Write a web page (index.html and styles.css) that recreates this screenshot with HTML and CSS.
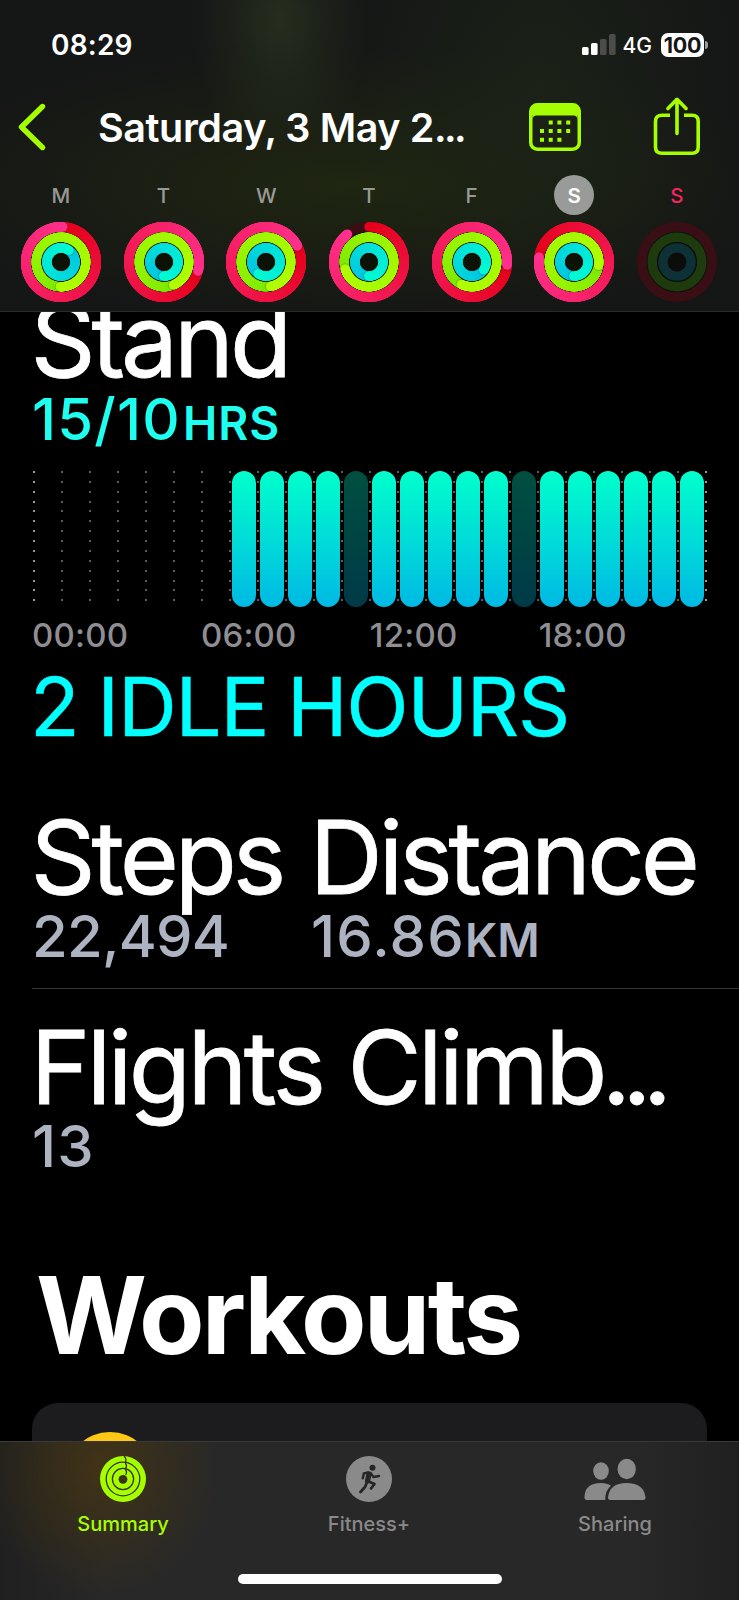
FILE: index.html
```html
<!DOCTYPE html>
<html lang="en">

<head>
    <meta charset="utf-8">
    <title>Activity</title>
    <link rel="stylesheet" href="styles.css">
</head>

<body>
    <header class="top">
        <div class="status">
            <span class="time">08:29</span>
            <div class="status-right">
                <svg class="signal" width="34" height="21" viewBox="0 0 34 21">
                    <rect x="0" y="13" width="6.6" height="8" rx="1.6" fill="#fff"/>
                    <rect x="9" y="9" width="6.6" height="12" rx="1.6" fill="#fff"/>
                    <rect x="18" y="5" width="6.6" height="16" rx="1.6" fill="#4b4d4a"/>
                    <rect x="27" y="0" width="6.6" height="21" rx="1.6" fill="#4b4d4a"/>
                </svg>
                <span class="network">4G</span>
                <span class="battery">100</span>
                <span class="battery-cap"></span>
            </div>
        </div>

        <div class="nav">
            <svg class="back" width="30" height="50" viewBox="0 0 30 50">
                <path d="M25.5 4.5 L4.5 25 L25.5 45.5" fill="none" stroke="#a6ff00" stroke-width="5.4" stroke-linecap="round" stroke-linejoin="round"/>
            </svg>
            <h1 class="date">Saturday, 3 May 2<span class="dots">...</span></h1>
            <svg class="calendar" width="52" height="48" viewBox="0 0 52 48">
                <rect x="1.75" y="1.75" width="48.5" height="44.5" rx="6.5" fill="none" stroke="#a6ff00" stroke-width="3.5"/>
                <path d="M2 12 V8 Q2 2 8 2 H44 Q50 2 50 8 V12 Z" fill="#a6ff00"/>
                <path d="M3.5 17 V12 H48.5 V17 Q48.5 12.5 44.5 12.5 H7.5 Q3.5 12.5 3.5 17 Z" fill="#a6ff00"/>
                <g fill="#a6ff00">
                    <rect x="19.7" y="17.5" width="4" height="4"/><rect x="28.4" y="17.5" width="4" height="4"/><rect x="37.2" y="17.5" width="4" height="4"/>
                    <rect x="11" y="26" width="4" height="4"/><rect x="19.7" y="26" width="4" height="4"/><rect x="28.4" y="26" width="4" height="4"/><rect x="37.2" y="26" width="4" height="4"/>
                    <rect x="11" y="34.8" width="4" height="4"/><rect x="19.7" y="34.8" width="4" height="4"/><rect x="28.4" y="34.8" width="4" height="4"/>
                </g>
            </svg>
            <svg class="share" width="48" height="60" viewBox="0 0 48 60">
                <g fill="none" stroke="#a6ff00" stroke-width="3.6" stroke-linecap="round" stroke-linejoin="round">
                    <path d="M17 18.2 H9 Q2.5 18.2 2.5 24.2 V50 Q2.5 56.3 9 56.3 H39 Q45.2 56.3 45.2 50 V24.2 Q45.2 18.2 39 18.2 H31" stroke-linecap="butt"/>
                    <path d="M24 36.5 V3 M15 11.5 L24 2.3 L33 11.5"/>
                </g>
            </svg>
        </div>

        <div class="week" id="week"></div>
    </header>

    <main class="content">
        <section>
            <h2 class="metric">Stand</h2>
            <p class="value stand">15/10<small>HRS</small></p>
            <div class="chart" id="chart"></div>
            <div class="hours">
                <span>00:00</span><span>06:00</span><span>12:00</span><span>18:00</span>
            </div>
            <p class="idle">2 IDLE HOURS</p>
        </section>

        <section class="row">
            <div class="steps">
                <h2 class="metric">Steps</h2>
                <p class="value">22,494</p>
            </div>
            <div>
                <h2 class="metric">Distance</h2>
                <p class="value">16.86<small>KM</small></p>
            </div>
        </section>

        <section class="flights">
            <h2 class="metric">Flights Climb<span class="dots">...</span></h2>
            <p class="value">13</p>
        </section>

        <h2 class="workouts">Workouts</h2>
        <div class="card"><div class="badge"></div></div>
    </main>

    <footer class="tabs">
        <div class="tab active">
            <svg width="46" height="46" viewBox="0 0 46 46">
                <circle cx="23" cy="23" r="23" fill="#a6ff00"/>
                <g fill="none" stroke="#3a3113" stroke-width="1.3">
                    <circle cx="23" cy="23" r="16.8"/>
                    <circle cx="23" cy="23" r="10.6"/>
                    <path d="M24 0 Q27 3 25.5 6 V7.5 Q27.5 10 25.5 12.3 V13.5 Q27.5 16 25.5 19"/>
                </g>
                <circle cx="23" cy="23.3" r="4.4" fill="#3a3113"/>
            </svg>
            <span>Summary</span>
        </div>
        <div class="tab">
            <svg width="46" height="46" viewBox="0 0 46 46">
                <circle cx="23" cy="23" r="23" fill="#8a8a8a"/>
                <circle cx="26.5" cy="11.8" r="3" fill="#262626"/>
                <g fill="none" stroke="#262626" stroke-linecap="round" stroke-linejoin="round">
                    <path d="M23 18 L21.5 25" stroke-width="5.2"/>
                    <path d="M22 16.5 L17.8 17.5 L16.8 22.3 M24.5 17 L27.5 21 L33 20" stroke-width="2.4"/>
                    <path d="M22.5 25.5 L28.5 28 L25 32.5 M20.5 27.5 L19 31 L14.5 36" stroke-width="2.8"/>
                </g>
            </svg>
            <span>Fitness+</span>
        </div>
        <div class="tab">
            <svg width="62" height="46" viewBox="0 0 62 46">
                <g fill="#8a8a8a">
                    <ellipse cx="17" cy="15" rx="7.8" ry="8.8"/>
                    <ellipse cx="42.7" cy="13" rx="9.2" ry="10.2"/>
                    <path d="M0.5 41.5 Q0.5 27 17 27 Q23 27 27 29.8 Q21 34.5 21.3 44 H3 Q0.5 44 0.5 41.5 Z"/>
                    <path d="M24 41.5 Q25.5 27 42.5 27 Q60 27 61.5 41.5 Q61.5 44 59 44 H26.5 Q24 44 24 41.5 Z"/>
                </g>
            </svg>
            <span>Sharing</span>
        </div>
        <div class="home"></div>
    </footer>

    <script>
        // end angle (degrees) of the move, exercise and stand rings
        const days = [
            { name: 'M', ends: [3, 182, 35] },
            { name: 'T', ends: [105, 158, 182] },
            { name: 'W', ends: [63, 170, 215] },
            { name: 'T', ends: [322, 254, 182], open: true },
            { name: 'F', ends: [95, 206, 125] },
            { name: 'S', ends: [278, 98, 182], selected: true },
            { name: 'S', ends: [0, 0, 0], future: true }
        ];
        const rings = [
            { r: 35.2, width: 9.6, ease: 0.9, from: [228, 0, 24], to: [255, 48, 140], track: '#3c0d13' },
            { r: 24.8, width: 9.2, ease: 0.45, from: [112, 228, 0], to: [176, 255, 0], track: '#173800' },
            { r: 14.1, width: 9.2, ease: 0.8, from: [0, 192, 226], to: [0, 250, 212], track: '#003438' }
        ];

        function point(r, deg) {
            const a = (deg - 90) * Math.PI / 180;
            return [(40 + r * Math.cos(a)).toFixed(2), (40 + r * Math.sin(a)).toFixed(2)];
        }

        function mix(a, b, t) {
            return 'rgb(' + a.map((v, i) => Math.round(v + (b[i] - v) * t)).join(',') + ')';
        }

        function drawRing(ring, end, open) {
            // an open ring starts at the top, a closed one shows its last lap
            const length = open ? end : 360;
            const start = end - length;
            const cap = ring.width / 2;
            let out = `<circle cx="40" cy="40" r="${ring.r}" fill="none" stroke="${open ? ring.track : mix(ring.from, ring.to, .5)}" stroke-width="${ring.width}"/>`;
            if (open) {
                const s = point(ring.r, 0);
                out += `<circle cx="${s[0]}" cy="${s[1]}" r="${cap}" fill="${mix(ring.from, ring.to, 0)}"/>`;
            }
            for (let d = 0; d < length; d += 5) {
                const p = point(ring.r, start + d);
                const q = point(ring.r, start + Math.min(d + 20, length));
                const color = mix(ring.from, ring.to, Math.pow(d / length, ring.ease));
                out += `<path d="M${p} A${ring.r} ${ring.r} 0 0 1 ${q}" fill="none" stroke="${color}" stroke-width="${ring.width}"/>`;
            }
            const c = point(ring.r, end);
            const shade = point(ring.r, end + 50 / ring.r);
            if (!open) out += `<circle cx="${shade[0]}" cy="${shade[1]}" r="${cap}" fill="#000" opacity=".22"/>`;
            out += `<circle cx="${c[0]}" cy="${c[1]}" r="${cap}" fill="${mix(ring.from, ring.to, 1)}"/>`;
            return out;
        }

        function drawDay(day) {
            let svg;
            if (day.future) {
                svg = '<circle cx="40" cy="40" r="30" fill="#0c0d0b"/><g fill="none" stroke-width="9.4">'
                    + '<circle cx="40" cy="40" r="35.2" stroke="#3a0e15"/><circle cx="40" cy="40" r="24.8" stroke="#1d3b0d"/><circle cx="40" cy="40" r="14.1" stroke="#0e3037"/></g>';
            } else {
                svg = '<circle cx="40" cy="40" r="38" fill="#0c1206"/>';
                rings.forEach((ring, i) => svg += drawRing(ring, day.ends[i], day.open && i === 0));
            }
            const cls = 'day' + (day.selected ? ' selected' : '') + (day.future ? ' future' : '');
            return `<div class="${cls}"><span class="day-name">${day.name}</span><svg width="80" height="80" viewBox="0 0 80 80">${svg}</svg></div>`;
        }

        document.getElementById('week').innerHTML = days.map(drawDay).join('');

        // stand hours: 1 = stood, 0 = idle, null = nothing recorded
        const hours = [null, null, null, null, null, null, null, 1, 1, 1, 1, 0, 1, 1, 1, 1, 1, 0, 1, 1, 1, 1, 1, 1];
        document.getElementById('chart').innerHTML = hours.map(h => {
            const bar = h === null ? '' : `<i class="bar${h ? '' : ' off'}"></i>`;
            return `<div class="hour">${bar}</div>`;
        }).join('');
    </script>
</body>

</html>
```
FILE: styles.css
```css
* {
    box-sizing: border-box;
}

body {
    margin: 0;
    width: 739px;
    height: 1600px;
    display: flex;
    flex-direction: column;
    overflow: hidden;
    background-color: #000;
    color: #fff;
    font-family: Inter, "Liberation Sans", sans-serif;
}

h1, h2, p {
    margin: 0;
    font-weight: 400;
    white-space: nowrap;
}

svg {
    display: block;
    flex: none;
}

/* header */
.top {
    height: 312px;
    flex: none;
    border-bottom: 1px solid #2b2b2b;
    background:
        radial-gradient(ellipse 90px 130px at 280px 20px, rgba(44, 54, 32, .75), rgba(44, 54, 32, .35) 50%, transparent),
        radial-gradient(ellipse 200px 220px at 540px 70px, rgba(30, 40, 24, .6), transparent),
        radial-gradient(ellipse 440px 140px at 350px 185px, #1f2611, transparent),
        #151616;
}

.status {
    height: 88px;
    display: flex;
    justify-content: space-between;
    padding: 1px 31px 0 51px;
    align-items: center;
}

.time {
    font-size: 28px;
    font-weight: 600;
    letter-spacing: 0.2px;
}

.status-right {
    display: flex;
    align-items: center;
}

.network {
    font-size: 21px;
    font-weight: 500;
    margin: 1px 9px 0 7px;
}

.battery {
    width: 43px;
    height: 24px;
    border-radius: 7px;
    background-color: #fff;
    color: #151616;
    font-size: 21.5px;
    line-height: 24px;
    font-weight: 700;
    letter-spacing: -0.3px;
    text-align: center;
}

.battery-cap {
    width: 3px;
    height: 8px;
    margin-left: 1px;
    border-radius: 0 4px 4px 0;
    background-color: #9b9c9a;
}

.nav {
    height: 78px;
    display: flex;
    align-items: center;
    padding-left: 17px;
}

.date {
    width: 382px;
    margin: 2px 0 0 51px;
    font-size: 39.5px;
    font-weight: 600;
    letter-spacing: -0.4px;
}

.date .dots {
    letter-spacing: -2.6px;
}

.calendar {
    margin-left: 49px;
}

.share {
    margin-left: 72px;
}

.week {
    display: flex;
    padding: 9px 0 0 9.5px;
}

.day {
    width: 102.7px;
    display: flex;
    flex-direction: column;
    align-items: center;
    gap: 7px;
}

.day-name {
    width: 40px;
    height: 40px;
    border-radius: 50%;
    line-height: 42px;
    font-size: 20.5px;
    font-weight: 500;
    color: #989a95;
    text-align: center;
}

.selected .day-name {
    background-color: #999b98;
    color: #fff;
    font-weight: 600;
}

.future .day-name {
    color: #f62460;
}

/* scrolled content */
.content {
    flex: 1;
    min-height: 0;
    overflow: hidden;
    padding-left: 32px;
}

.content > section:first-child {
    margin-top: -22px;
}

.metric {
    margin-left: -1.5px;
    font-size: 101.5px;
    line-height: 100px;
    letter-spacing: -4.1px;
    -webkit-text-stroke: 0.8px currentColor;
}

.flights .metric {
    letter-spacing: -3.6px;
}

.metric .dots {
    margin-left: -2px;
    letter-spacing: -8.8px;
}

.value {
    font-size: 58px;
    line-height: 58px;
    font-weight: 500;
    letter-spacing: 1.2px;
    color: #aeb3c1;
}

.value small {
    font-size: 46px;
    line-height: 1;
    font-weight: 600;
    letter-spacing: 0;
}

.stand {
    color: #1ffff0;
}

.stand small {
    margin-left: 2px;
    letter-spacing: 1px;
}

.chart {
    display: flex;
    width: 675px;
    height: 136px;
    margin: 23px 0 0 1px;
}

/* dotted line at the left edge of every hour */
.hour {
    width: 28px;
    flex: none;
    padding-left: 2.7px;
    background: repeating-linear-gradient(#5c5c5c 0 2px, transparent 2px 9.87px) 0 0 / 2px 131px no-repeat;
}

.hour:first-child {
    background-image: repeating-linear-gradient(#9a9a9a 0 2px, transparent 2px 9.87px);
}

.hour:last-child {
    background-image: repeating-linear-gradient(#5c5c5c 0 2px, transparent 2px 9.87px), repeating-linear-gradient(#9a9a9a 0 2px, transparent 2px 9.87px);
    background-position: 0 0, 100% 0;
    width: 29.5px;
}

.bar {
    display: block;
    width: 24px;
    height: 136px;
    border-radius: 12px;
    background: linear-gradient(#00ffcc, #00b9e4);
}

.bar.off {
    background: linear-gradient(#004f40, #003a48);
}

.hours {
    display: flex;
    margin-top: 8px;
    font-size: 33px;
    line-height: 40px;
    font-weight: 500;
    letter-spacing: 0.2px;
    color: #8e8e93;
}

.hours span {
    width: 168.9px;
}

.idle {
    margin: 7px 0 0 -2px;
    font-size: 81.5px;
    line-height: 90px;
    letter-spacing: -1.2px;
    word-spacing: -3px;
    -webkit-text-stroke: 0.5px currentColor;
    color: #00ffff;
}

.row {
    display: flex;
    margin-top: 55px;
    padding-bottom: 23px;
    border-bottom: 1px solid #343436;
}

.steps {
    width: 279px;
}

.steps .value {
    letter-spacing: -0.8px;
}

.flights {
    margin-top: 28px;
}

.workouts {
    margin-top: 85px;
    padding-left: 4px;
    font-size: 107px;
    line-height: 110px;
    font-weight: 700;
    letter-spacing: -2.8px;
}

.card {
    width: 675px;
    height: 200px;
    margin-top: 33px;
    padding: 29px 0 0 34px;
    border-radius: 26px;
    background-color: #1c1c1e;
}

.badge {
    width: 88px;
    height: 88px;
    border-radius: 50%;
    background-color: #ffc814;
}

/* tab bar */
.tabs {
    height: 159px;
    flex: none;
    display: flex;
    flex-wrap: wrap;
    justify-content: center;
    align-content: flex-start;
    border-top: 1px solid #3a3a3a;
    background:
        radial-gradient(ellipse 120px 130px at 100px 25px, rgba(76, 56, 14, .7), transparent),
        linear-gradient(90deg, #202020, #282828 15%, #282828 85%, #202020);
}

.tab {
    width: 246px;
    height: 132px;
    padding: 14px 1px 0 0;
    display: flex;
    flex-direction: column;
    align-items: center;
    font-size: 20px;
    line-height: 24px;
    font-weight: 500;
    color: #8a8a8a;
}

.tab span {
    margin-top: 10px;
}

.active {
    color: #a6ff00;
}

.home {
    width: 264px;
    height: 10px;
    border-radius: 5px;
    background-color: #fff;
}
```
